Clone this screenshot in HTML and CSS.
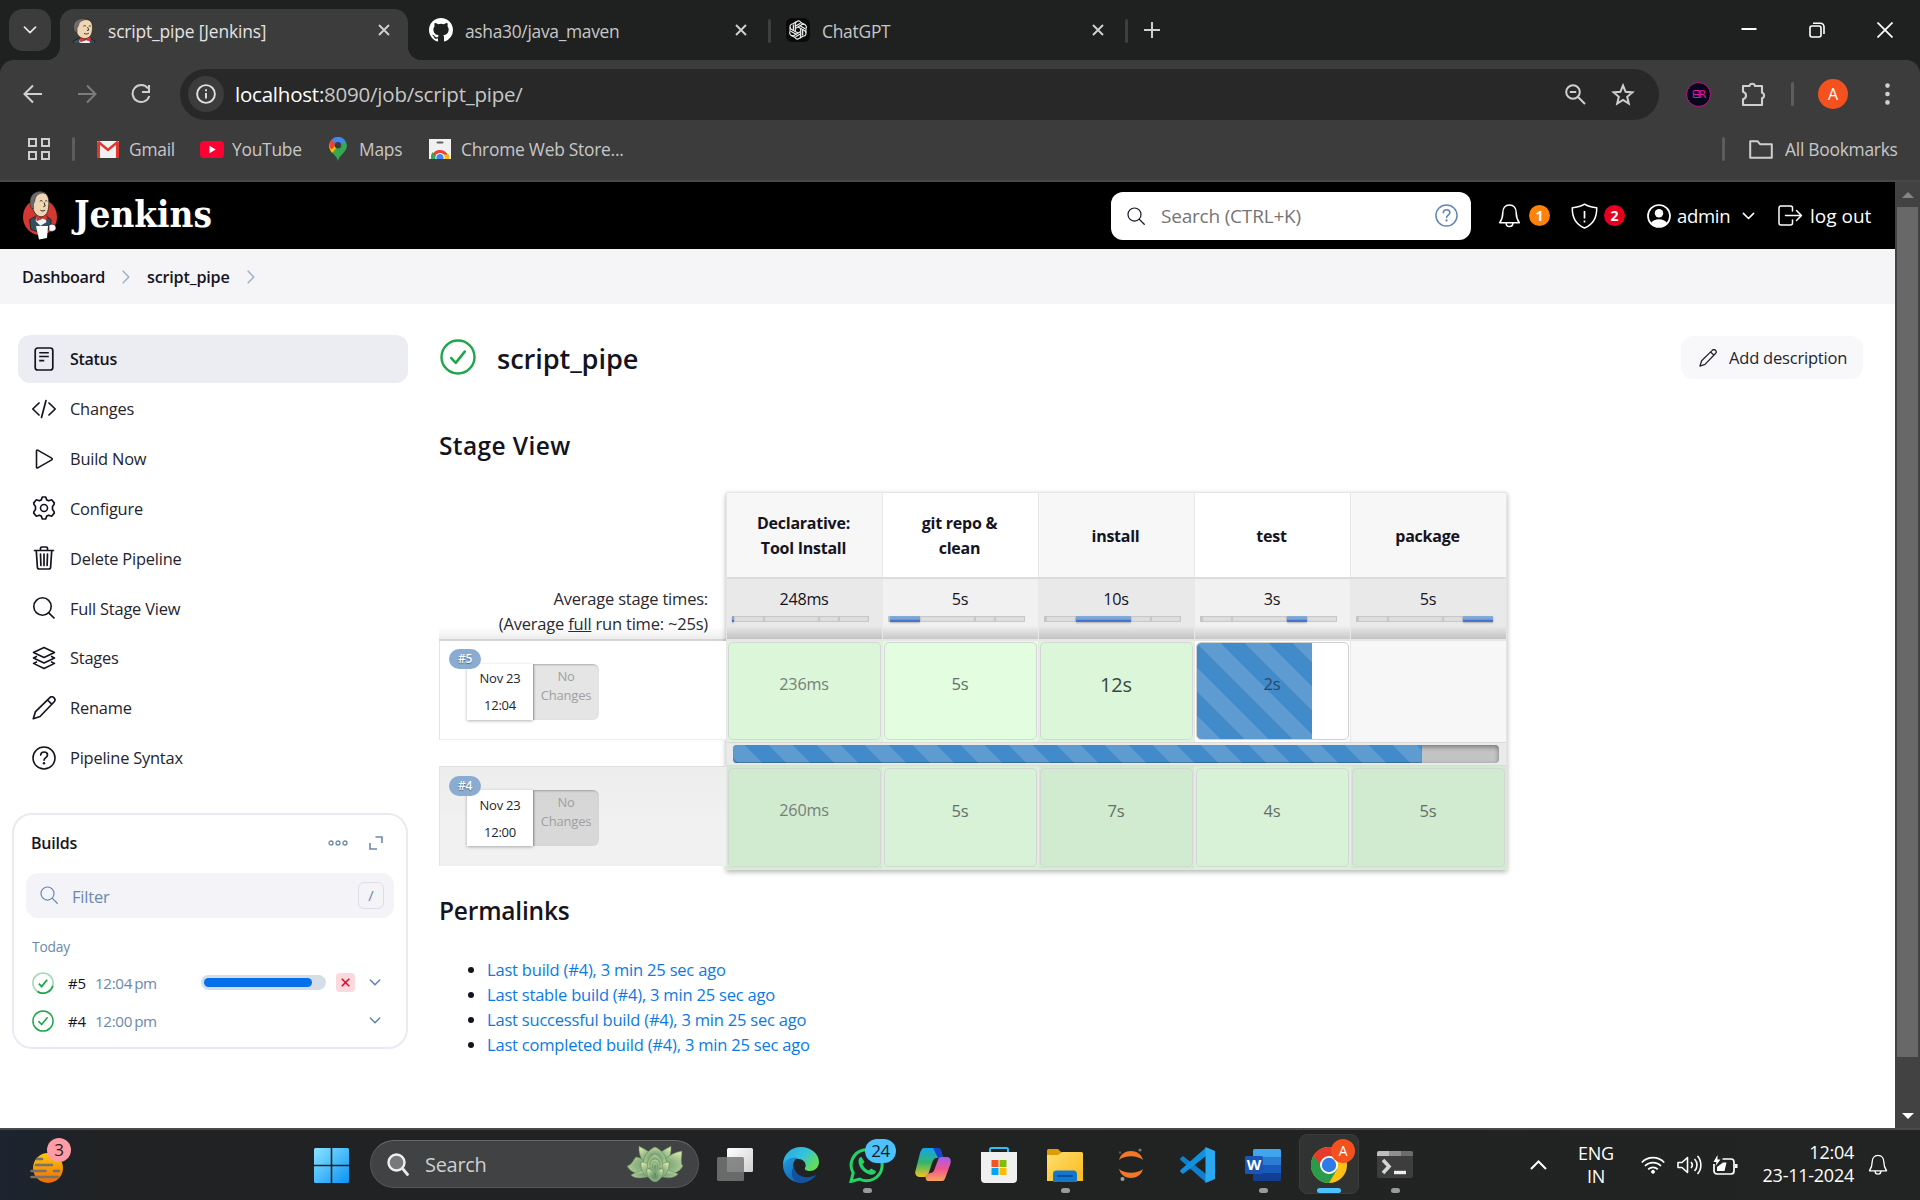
FILE: index.html
```html
<!DOCTYPE html>
<html lang="en">
<head>
<meta charset="utf-8">
<title>script_pipe [Jenkins]</title>
<link rel="stylesheet" href="styles.css">
</head>
<body>
<svg class="defs" aria-hidden="true">
  <defs>
    <linearGradient id="edgeA" x1="0" y1="0" x2="1" y2=".6"><stop offset="0" stop-color="#2aa7dc"/><stop offset=".55" stop-color="#35c1e0"/><stop offset="1" stop-color="#64de54"/></linearGradient>
    <linearGradient id="edgeB" x1="0" y1="0" x2="1" y2="1"><stop offset="0" stop-color="#1f9be0"/><stop offset="1" stop-color="#0f4f9c"/></linearGradient>
    <linearGradient id="win" x1="0" y1="0" x2="1" y2="1"><stop offset="0" stop-color="#8be4ff"/><stop offset="1" stop-color="#0a93f5"/></linearGradient>
    <linearGradient id="sun" x1="0" y1="0" x2="0" y2="1"><stop offset="0" stop-color="#fdc80c"/><stop offset="1" stop-color="#ee6a05"/></linearGradient>
    <linearGradient id="copA" x1="0" y1="0" x2="0" y2="1"><stop offset="0" stop-color="#14a4ee"/><stop offset=".5" stop-color="#35b56c"/><stop offset="1" stop-color="#f4c31f"/></linearGradient>
    <linearGradient id="copB" x1="0" y1="0" x2="0" y2="1"><stop offset="0" stop-color="#a35cf2"/><stop offset=".5" stop-color="#f0568d"/><stop offset="1" stop-color="#f8a35a"/></linearGradient>
    <linearGradient id="fold" x1="0" y1="0" x2="1" y2="1"><stop offset="0" stop-color="#ffdf72"/><stop offset="1" stop-color="#fbb918"/></linearGradient>
    <linearGradient id="tv" x1="0" y1="0" x2="1" y2="1"><stop offset="0" stop-color="#fff"/><stop offset="1" stop-color="#cfcfcf"/></linearGradient>
    <radialGradient id="leaf" cx=".5" cy=".6" r=".65"><stop offset="0" stop-color="#5d8c62"/><stop offset=".55" stop-color="#8fb685"/><stop offset="1" stop-color="#d2e0a4"/></radialGradient>
    <symbol id="x" viewBox="0 0 12 12"><path d="M1 1l10 10M11 1L1 11" fill="none" stroke="currentColor" stroke-width="1.9"/></symbol>
    <symbol id="chev" viewBox="0 0 14 8"><path d="M1.500 1.200L7 6.700l5.500-5.500" fill="none" stroke="currentColor" stroke-width="1.700" stroke-linecap="round" stroke-linejoin="round"/></symbol>
    <symbol id="crumb" viewBox="0 0 8 14"><path d="M1.200 1.200L6.800 7l-5.600 5.800" fill="none" stroke="currentColor" stroke-width="1.600" stroke-linecap="round" stroke-linejoin="round"/></symbol>
    <symbol id="mag" viewBox="0 0 24 24"><circle cx="10" cy="10" r="8.700" fill="none" stroke="currentColor" stroke-width="1.600"/><path d="M16.500 16.500L23 23" stroke="currentColor" stroke-width="1.700" stroke-linecap="round"/></symbol>
    <symbol id="help" viewBox="0 0 24 24"><circle cx="12" cy="12" r="11" fill="none" stroke="currentColor" stroke-width="1.600"/><path d="M8.700 9c.1-2 1.500-3 3.400-3s3.400 1.100 3.400 2.900c0 2.700-3.400 2.600-3.400 5.200" fill="none" stroke="currentColor" stroke-width="1.700" stroke-linecap="round"/><circle cx="12" cy="17.200" r="1.200" fill="currentColor"/></symbol>
    <symbol id="ok" viewBox="0 0 24 24"><circle cx="12" cy="12" r="11" fill="none" stroke="currentColor" stroke-width="1.600"/><path d="M7.500 12.700l3 3.200 6-7.500" fill="none" stroke="currentColor" stroke-width="1.700" stroke-linecap="round" stroke-linejoin="round"/></symbol>
    <symbol id="pencil" viewBox="0 0 24 24"><path d="M1.300 22.700l2.200-7.100L17.600 1.800a2.900 2.900 0 0 1 4.400 4.200L8 20.500zM15.500 4l4.500 4.300" fill="none" stroke="currentColor" stroke-width="1.700" stroke-linejoin="round"/></symbol>
    <symbol id="bell" viewBox="0 0 24 26"><path d="M12 1.500c-4.600 0-7 3.500-7 8 0 6-1.500 8-3.300 10.500h20.600C20.500 17.500 19 15.500 19 9.500c0-4.500-2.400-8-7-8zM8.500 20.500a3.500 3.500 0 0 0 7 0" fill="none" stroke="currentColor" stroke-width="1.600" stroke-linejoin="round"/></symbol>
    <g id="man">
      <path d="M8 21l-5 3 1 8 6 2h5l5-3 1-7-5-4z" fill="#335061" stroke="#111" stroke-width=".6"/>
      <path d="M9 20l3 4 4-4 1 6-5 3-4-4z" fill="#f4f4f4"/>
      <path d="M5 8c0-5 3.500-7.500 7-7.300C16.500 1 19 4 19 9c.2 6-1 12-6 12.500C8 22 4.500 15 5 8z" fill="#f0d6b7" stroke="#221" stroke-width=".6"/>
      <path d="M4 14C2.300 7 4 2.500 9 .8 12 0 15 .8 16 2c-3-.8-6 .2-7.500 2.500C7 7 8 8 6.500 10c-.6 1.500 0 3-.2 5z" fill="#6d6b6d" stroke="#221" stroke-width=".4"/>
      <path d="M11.500 8.500c.8-.6 1.600-.6 2.200 0M16 8.500c.6-.5 1.200-.5 1.700 0M15 9.500l1 3-1.500.6M12 16c1.500 1 3 .8 4-.2" fill="none" stroke="#221" stroke-width=".8"/>
      <path d="M8.500 20l4.500 2 4.300-2.500.7 4.700-4.600-1.400-4.300 2.200z" fill="#d33833" stroke="#711" stroke-width=".3"/>
    </g>
  </defs>
</svg>

<header class="browser">
  <div class="tabstrip">
    <button class="tab-search"><svg width="14" height="8"><use href="#chev"/></svg></button>
    <div class="tab active">
      <svg class="fav" width="24" height="25" viewBox="2 0 20 26" preserveAspectRatio="none"><use href="#man"/></svg>
      <span class="t1">script_pipe [Jenkins]</span>
      <svg width="12" height="12"><use href="#x"/></svg>
    </div>
    <div class="tab tab2">
      <svg class="fav" width="24" height="24" viewBox="0 0 16 16"><path fill="#fff" d="M8 0C3.580 0 0 3.580 0 8c0 3.540 2.290 6.530 5.470 7.590.4.070.55-.17.55-.38 0-.19-.01-.82-.01-1.490-2.010.37-2.530-.49-2.690-.94-.09-.23-.48-.94-.82-1.130-.28-.15-.68-.52-.01-.53.63-.01 1.080.58 1.230.82.720 1.210 1.870.87 2.330.66.070-.52.28-.87.51-1.070-1.780-.2-3.640-.89-3.640-3.950 0-.87.31-1.590.82-2.150-.08-.2-.36-1.020.08-2.120 0 0 .67-.21 2.200.82a7.600 7.600 0 0 1 4 0c1.530-1.040 2.200-.82 2.200-.82.44 1.100.16 1.920.08 2.120.51.560.82 1.270.82 2.150 0 3.070-1.870 3.750-3.650 3.950.29.250.54.730.54 1.480 0 1.070-.01 1.930-.01 2.200 0 .21.150.46.55.38A8 8 0 0 0 16 8c0-4.420-3.580-8-8-8z"/></svg>
      <span class="t2">asha30/java_maven</span>
      <svg width="12" height="12"><use href="#x"/></svg>
    </div>
    <i class="tsep"></i>
    <div class="tab tab3">
      <svg class="fav" width="24" height="24" viewBox="0 0 24 24"><rect width="24" height="24" rx="6" fill="#0a0a0a"/><g fill="none" stroke="#eee" stroke-width="1.200"><g id="petal"><path d="M9.300 8.300V5.800a3 3 0 0 1 5.600-1.300l3.300 2"/><path d="M9.300 13.500V8.200l5.200-3"/></g><use href="#petal" transform="rotate(60 12 12)"/><use href="#petal" transform="rotate(120 12 12)"/><use href="#petal" transform="rotate(180 12 12)"/><use href="#petal" transform="rotate(240 12 12)"/><use href="#petal" transform="rotate(300 12 12)"/></g></svg>
      <span class="t3">ChatGPT</span>
      <svg width="12" height="12"><use href="#x"/></svg>
    </div>
    <i class="tsep"></i>
    <svg class="newtab" width="16" height="16" viewBox="0 0 16 16"><path d="M8 0v16M0 8h16" stroke="#d0d0d0" stroke-width="2"/></svg>
    <div class="wincontrols">
      <svg width="16" height="16" viewBox="0 0 16 16"><path d="M.5 7h15" stroke="#fff" stroke-width="2"/></svg>
      <svg width="16" height="16" viewBox="0 0 16 16" fill="none" stroke="#fff" stroke-width="1.600"><rect x="1" y="4" width="11" height="11" rx="2"/><path d="M4 1.200h7.500a3.500 3.500 0 0 1 3.500 3.500V12"/></svg>
      <svg width="16" height="16" viewBox="0 0 16 16"><path d="M.5.500l15 15M15.500.500l-15 15" stroke="#fff" stroke-width="1.700"/></svg>
    </div>
  </div>

  <div class="toolbar">
    <svg class="nav" width="20" height="20" viewBox="0 0 20 20"><path d="M19 10H2M10 1.500L1.500 10l8.500 8.500" fill="none" stroke="#d0d0d0" stroke-width="2"/></svg>
    <svg class="nav" width="20" height="20" viewBox="0 0 20 20"><path d="M1 10h17M10 1.500l8.500 8.500-8.500 8.500" fill="none" stroke="#7c7c7c" stroke-width="2"/></svg>
    <svg class="nav" width="20" height="20" viewBox="0 0 20 20"><path d="M17 4.500A8.500 8.500 0 1 0 18.300 12" fill="none" stroke="#d0d0d0" stroke-width="2"/><path d="M18 1v7h-7" fill="none" stroke="#d0d0d0" stroke-width="2"/></svg>
    <div class="urlbar">
      <span class="siteinfo"><svg width="20" height="20" viewBox="0 0 20 20"><circle cx="10" cy="10" r="8.900" fill="none" stroke="#e0e0e0" stroke-width="1.900"/><path d="M10 9v5.500M10 5.300v2" stroke="#e0e0e0" stroke-width="1.900"/></svg></span>
      <span class="url"><b>localhost:</b>8090/job/script_pipe/</span>
      <svg class="zoomout" width="21" height="21" viewBox="0 0 21 21" fill="none" stroke="#cfcfcf" stroke-width="2"><circle cx="8" cy="8" r="6.800"/><path d="M4.800 8h6.400M13 13l7 7"/></svg>
      <svg class="star" width="24" height="23" viewBox="0 0 24 23"><path d="M12 2.500l2.600 6.300 6.800.6-5.200 4.400 1.600 6.700-5.800-3.600-5.800 3.600 1.600-6.700L2.600 9.400l6.800-.6z" fill="none" stroke="#cfcfcf" stroke-width="2"/></svg>
    </div>
    <span class="ext">ᗺR</span>
    <svg class="puzzle" width="25" height="25" viewBox="0 0 25 25"><path d="M2 4h6.500a2.800 2.800 0 0 1 5.500 0h7v6.800a2.800 2.800 0 0 1 0 5.400V23H2v-5.800c4-1.200 4-6.200 0-7.400z" fill="none" stroke="#cfcfcf" stroke-width="2.100" stroke-linejoin="round"/></svg>
    <i class="vsep"></i>
    <span class="avatar">A</span>
    <svg class="dots" width="5" height="22" viewBox="0 0 5 22" fill="#d0d0d0"><circle cx="2.500" cy="2.600" r="2.300"/><circle cx="2.500" cy="11" r="2.300"/><circle cx="2.500" cy="19.400" r="2.300"/></svg>
  </div>

  <div class="bookmarks">
    <svg class="apps" width="22" height="22" viewBox="0 0 22 22" fill="none" stroke="#cfcfcf" stroke-width="2"><path d="M1 1h7v7H1zM14 1h7v7h-7zM1 14h7v7H1zM14 14h7v7h-7z"/></svg>
    <i class="vsep s1"></i>
    <svg class="b-gmail" width="22" height="17" viewBox="0 0 22 17"><path d="M0 0h22v17H0z" fill="#f1f1f1"/><path d="M3 17V4l8 6.500L19 4v13h3V1.500A1.800 1.800 0 0 0 19.500.3L11 7.200 2.500.3A1.800 1.800 0 0 0 0 1.500V17z" fill="#e0382c"/></svg>
    <span class="w-gmail">Gmail</span>
    <svg width="24" height="17" viewBox="0 0 24 17"><rect width="24" height="17" rx="4" fill="#f03"/><path d="M9.500 4.800v7.400l6.200-3.700z" fill="#fff"/></svg>
    <span class="w-yt">YouTube</span>
    <svg class="b-map" width="18" height="24" viewBox="0 0 18 24"><path d="M9 24C8 18 0 15 0 8.500A9 9 0 0 1 9 0a9 9 0 0 1 9 8.500C18 15 10 18 9 24z" fill="#34a853"/><path d="M1 12.500C0 10 0 7 1.800 4.200L9 9l-5.800 7C2.300 15 1.500 14 1 12.500z" fill="#fbbc04"/><path d="M1.800 4.200L3 2.500 8 7 2.500 12.500C0 10 0 7 1.800 4.200z" fill="#ea4335"/><path d="M3 2.700C6-1 13-1 16.200 4L9 10z" fill="#4285f4"/><circle cx="9" cy="8.200" r="3.200" fill="#3b3b3b"/></svg>
    <span class="w-maps">Maps</span>
    <svg width="22" height="20" viewBox="0 0 22 20"><path d="M0 0h22v20H0z" fill="#f1f1f1"/><rect x="7.500" y="2.500" width="7" height="2" rx="1" fill="#5f6368"/><path d="M2 20a9 9 0 0 1 17.500-3H11z" fill="#ea4335"/><path d="M2 20a9 9 0 0 1 1.500-7l5 7z" fill="#34a853"/><path d="M14 20l-1-4.500h7c.5 1.500.5 3 .3 4.500z" fill="#fbbc04"/><circle cx="11" cy="18.500" r="4.600" fill="#fff"/><circle cx="11" cy="18.500" r="3.600" fill="#4285f4"/></svg>
    <span class="w-cws">Chrome Web Store...</span>
    <i class="vsep s2"></i>
    <svg class="b-folder" width="24" height="19" viewBox="0 0 24 19"><path d="M1.200 1.200h7.300l2.500 3h11.800v13.600H1.200z" fill="none" stroke="#cfcfcf" stroke-width="2" stroke-linejoin="round"/></svg>
    <span class="w-all">All Bookmarks</span>
  </div>
</header>

<div class="viewport">
  <div class="page">
    <header class="jheader">
      <svg class="jlogo" width="36" height="49" viewBox="0 0 36 49"><ellipse cx="18" cy="26" rx="17" ry="18" fill="#d33833"/><g transform="translate(4 0) scale(1.200)"><use href="#man"/></g><path d="M14 35h12l-1 12-8 1.500z" fill="#fff"/><path d="M27 34c4-2 7 0 7 3s-4 4-7 3z" fill="#f5f5f5" stroke="#111" stroke-width=".6"/></svg>
      <span class="jname">Jenkins</span>
      <div class="jsearch">
        <svg class="q" width="18" height="18"><use href="#mag"/></svg>
        <span>Search (CTRL+K)</span>
        <svg class="h" width="23" height="23"><use href="#help"/></svg>
      </div>
      <svg class="jbell" width="23" height="26"><use href="#bell"/></svg>
      <span class="count orange">1</span>
      <svg class="jshield" width="27" height="26" viewBox="0 0 27 26"><path d="M13.500 1.200C10 3.500 5.500 4.500 1.300 4.700 1 14 4 21 13.500 25 23 21 26 14 25.700 4.700 21.500 4.500 17 3.500 13.500 1.200z" fill="none" stroke="#fff" stroke-width="1.500" stroke-linejoin="round"/><path d="M13.500 8v7.500M13.500 17.500v2" stroke="#fff" stroke-width="1.700"/></svg>
      <span class="count red">2</span>
      <svg class="juser" width="24" height="24" viewBox="0 0 24 24"><circle cx="12" cy="12" r="11" fill="none" stroke="#fff" stroke-width="1.700"/><circle cx="12" cy="9.300" r="4.200" fill="#fff"/><path d="M3.800 19.200c3-5.400 13.400-5.400 16.400 0C16 24 8 24 3.800 19.200z" fill="#fff"/></svg>
      <span class="jadmin">admin</span>
      <svg class="jchev" width="13" height="8"><use href="#chev"/></svg>
      <svg class="jout" width="25" height="21" viewBox="0 0 25 21"><path d="M14.500 6V3a2 2 0 0 0-2-2H3a2 2 0 0 0-2 2v15a2 2 0 0 0 2 2h9.500a2 2 0 0 0 2-2v-3M7.500 10.500H23M18.500 5.500l5 5-5 5" fill="none" stroke="#fff" stroke-width="1.500" stroke-linecap="round" stroke-linejoin="round"/></svg>
      <span class="jlogout">log out</span>
    </header>

    <nav class="crumbs">
      <span class="c1">Dashboard</span><svg width="8" height="14"><use href="#crumb"/></svg>
      <span class="c2">script_pipe</span><svg width="8" height="14"><use href="#crumb"/></svg>
    </nav>

    <div class="columns">
      <aside class="side">
        <ul class="tasks">
          <li class="on"><svg viewBox="0 0 24 24"><rect x="3.200" y="1" width="17.600" height="22" rx="2.500" fill="none" stroke="currentColor" stroke-width="1.700"/><path d="M7.200 5.700h9.600M7.200 9.500h9.600M7.200 13.600h5" stroke="currentColor" stroke-width="1.600"/></svg>Status</li>
          <li><svg viewBox="0 0 24 24"><path d="M7 6L.8 12 7 18M17 6l6.200 6L17 18M14 3.500L9.500 20.500" fill="none" stroke="currentColor" stroke-width="1.700" stroke-linecap="round" stroke-linejoin="round"/></svg>Changes</li>
          <li><svg viewBox="0 0 24 24"><path d="M4.500 3.800v16.400a.8.800 0 0 0 1.200.7l14-8a1 1 0 0 0 0-1.800l-14-8a.8.800 0 0 0-1.200.7z" fill="none" stroke="currentColor" stroke-width="1.600"/></svg>Build Now</li>
          <li><svg viewBox="0 0 24 24"><circle cx="12" cy="12" r="3.500" fill="none" stroke="currentColor" stroke-width="1.600"/><path d="M10.300 1h3.400l1 2.900 2 .9 2.900-1 2.700 3.100-.3 1.500-1.500 2v3.200l1.500 2 .3 1.500-2.700 3.100-2.900-1-2 .9-1 2.900h-3.400l-1-2.900-2-.9-2.900 1-2.700-3.100.3-1.500 1.500-2v-3.200L2 8.400l-.3-1.500 2.700-3.100 2.900 1 2-.9z" fill="none" stroke="currentColor" stroke-width="1.700" stroke-linejoin="round"/></svg>Configure</li>
          <li><svg viewBox="0 0 24 24"><path d="M2.500 4.500h19M8.500 4V2.300A1.300 1.300 0 0 1 9.800 1h4.400a1.300 1.300 0 0 1 1.300 1.300V4M4.300 5l1.100 16.200a1.900 1.900 0 0 0 1.900 1.800h9.400a1.900 1.900 0 0 0 1.900-1.800L19.700 5M12 8v11.500M8.500 8l.4 11.500M15.500 8l-.4 11.500" fill="none" stroke="currentColor" stroke-width="1.700" stroke-linecap="round"/></svg>Delete Pipeline</li>
          <li><svg viewBox="0 0 24 24"><circle cx="10.500" cy="10.500" r="8.700" fill="none" stroke="currentColor" stroke-width="1.600"/><path d="M16.800 16.800L22.500 22.500" stroke="currentColor" stroke-width="1.700"/></svg>Full Stage View</li>
          <li><svg viewBox="0 0 24 24" fill="none" stroke="currentColor" stroke-width="1.600" stroke-linejoin="round"><path d="M12 1.500L22.500 6.500 12 11.500 1.500 6.500zM5 10.300l-3.500 1.700L12 17l10.500-5-3.500-1.700M5 15.700l-3.500 1.700L12 22.500l10.500-5.100-3.500-1.700"/></svg>Stages</li>
          <li><svg viewBox="0 0 24 24"><use href="#pencil"/></svg>Rename</li>
          <li><svg viewBox="0 0 24 24"><use href="#help"/></svg>Pipeline Syntax</li>
        </ul>
        <section class="builds">
          <div class="bhead"><b>Builds</b>
            <svg class="bd" width="20" height="6" viewBox="0 0 20 6" fill="none" stroke="#6b89ad" stroke-width="1.300"><circle cx="3" cy="3" r="2"/><circle cx="10" cy="3" r="2"/><circle cx="17" cy="3" r="2"/></svg>
            <svg width="14" height="14" viewBox="0 0 14 14" fill="none" stroke="#6b89ad" stroke-width="1.600"><path d="M6.500 1H13v6M1 7v6h7"/></svg>
          </div>
          <div class="filter"><svg width="18" height="18"><use href="#mag"/></svg><span>Filter</span><kbd>/</kbd></div>
          <div class="today">Today</div>
          <div class="build">
            <svg class="spin" width="22" height="22" viewBox="0 0 24 24"><circle cx="12" cy="12" r="11" fill="none" stroke="#a5d9b4" stroke-width="1.700"/><path d="M22.700 15A11 11 0 0 1 6 21.300" fill="none" stroke="#1ea64b" stroke-width="1.800"/><path d="M7.500 12.700l3 3.200 6-7.500" fill="none" stroke="#1ea64b" stroke-width="2"/></svg>
            <span class="num">#5</span><span class="time">12:04&#8201;pm</span>
            <span class="prog"><i></i></span>
            <span class="stop"><svg width="9" height="9"><use href="#x"/></svg></span>
            <svg class="bch" width="12" height="7"><use href="#chev"/></svg>
          </div>
          <div class="build">
            <svg width="22" height="22"><use href="#ok"/></svg>
            <span class="num">#4</span><span class="time">12:00&#8201;pm</span>
            <svg class="bch end" width="12" height="7"><use href="#chev"/></svg>
          </div>
        </section>
      </aside>

      <main class="main">
        <div class="titlebar">
          <svg width="36" height="36" viewBox="0 0 24 24"><use href="#ok"/></svg>
          <h1>script_pipe</h1>
          <button class="adddesc"><svg width="18" height="18"><use href="#pencil"/></svg>Add description</button>
        </div>
        <h2>Stage View</h2>
        <div class="stage">
          <div class="runs">
            <div class="avg">Average stage times:<br>(Average <u>full</u> run time: ~25s)</div>
            <div class="run">
              <span class="badge">#5</span>
              <div class="start">Nov 23<br>12:04</div><div class="changes">No<br>Changes</div>
            </div>
            <div class="run odd">
              <span class="badge">#4</span>
              <div class="start">Nov 23<br>12:00</div><div class="changes">No<br>Changes</div>
            </div>
          </div>
          <div class="table">
            <div class="row head"><div>Declarative:<br>Tool Install</div><div>git repo &amp;<br>clean</div><div>install</div><div>test</div><div>package</div></div>
            <div class="row totals">
              <div>248ms<span class="mini"><i></i><i></i><i></i><i></i><i></i></span></div>
              <div>5s<span class="mini"><i></i><i></i><i></i><i></i><i></i></span></div>
              <div>10s<span class="mini"><i></i><i></i><i></i><i></i><i></i></span></div>
              <div>3s<span class="mini"><i></i><i></i><i></i><i></i><i></i></span></div>
              <div>5s<span class="mini"><i></i><i></i><i></i><i></i><i></i></span></div>
            </div>
            <div class="row cells r5">
              <div class="g"><span>236ms</span></div><div class="g"><span class="m">5s</span></div><div class="g"><span class="l">12s</span></div>
              <div class="running"><span class="m">2s</span></div><div></div>
            </div>
            <div class="total"><div class="track"><i></i></div></div>
            <div class="row cells r4">
              <div class="g"><span>260ms</span></div><div class="g"><span class="m">5s</span></div><div class="g"><span class="m">7s</span></div>
              <div class="g"><span class="m">4s</span></div><div class="g"><span class="m">5s</span></div>
            </div>
          </div>
        </div>
        <h2 class="perma">Permalinks</h2>
        <ul class="links">
          <li><a>Last build (#4), 3 min 25 sec ago</a></li>
          <li><a>Last stable build (#4), 3 min 25 sec ago</a></li>
          <li><a>Last successful build (#4), 3 min 25 sec ago</a></li>
          <li><a>Last completed build (#4), 3 min 25 sec ago</a></li>
        </ul>
      </main>
    </div>
  </div>
  <div class="scroll"><i class="up"></i><i class="thumb"></i><i class="down"></i></div>
</div>

<footer class="taskbar">
  <div class="weather"><svg width="34" height="32" viewBox="0 0 34 32"><circle cx="18" cy="16" r="15" fill="url(#sun)"/><g stroke="#77716c" stroke-width="2.600" stroke-linecap="round"><path d="M7 7h5M6 13h16M1.500 19h14M24 19h5M1.500 25h26"/></g></svg><span>3</span></div>
  <svg class="start-btn" width="35" height="35" viewBox="0 0 35 35"><path d="M0 1.500A1.500 1.500 0 0 1 1.500 0H16.700V16.700H0zM18.300 0h15.200A1.500 1.500 0 0 1 35 1.500V16.700H18.300zM0 18.300H16.700V35H1.500A1.500 1.500 0 0 1 0 33.500zM18.300 18.300H35V33.500A1.500 1.500 0 0 1 33.500 35H18.300z" fill="url(#win)"/></svg>
  <div class="tsearch">
    <svg width="22" height="23" viewBox="0 0 22 23"><circle cx="9.500" cy="9.500" r="8" fill="#77797a" stroke="#f0f0f0" stroke-width="2.400"/><path d="M15.500 15.500l5 6" stroke="#e8e8e8" stroke-width="2.800" stroke-linecap="round"/></svg>
    <span>Search</span>
    <svg class="plant" width="56" height="36" viewBox="0 0 56 36"><g fill="url(#leaf)" stroke="#5f885b" stroke-width=".6">
      <path d="M28 24C18 20 11 12 12 0 18 4 24 5 28 14zM28 24C38 20 45 12 44 0 38 4 32 5 28 14z"/>
      <path d="M28 27C17 30 5 29 0 20c5-1 6-6 9-9 7 1 14 6 19 16zM28 27c11 3 23 2 28-7-3-3-1-10-1-15-12 2-22 10-27 22z"/>
      <path d="M28 28C18 33 7 33 4 29c8-5 16-6 24-1zM28 28c10 5 19 5 23 0-8-4-15-5-23 0z"/>
      <path d="M17 20C15 11 21 4 28 1c7 3 13 10 11 19z"/>
      <path d="M28 33c-9 0-15-8-14-17 7 0 13 5 14 17zM28 33c9 0 15-8 14-17-7 0-13 5-14 17z"/>
      <path d="M21 22c-2-7 2-12 7-14 5 2 9 7 7 14z"/>
      <path d="M28 36c-5-1-9-7-8-13 4-1 8 3 8 7 0-4 4-8 8-7 1 6-3 12-8 13z"/>
      <ellipse cx="28" cy="20" rx="5" ry="7"/><ellipse cx="28" cy="20.500" rx="2.500" ry="4.500"/></g></svg>
  </div>
  <div class="apps-row">
    <div class="app"><svg viewBox="0 0 36 36"><rect x="10" y="1" width="26" height="24" rx="1.500" fill="url(#tv)"/><rect y="10" width="27" height="24" rx="1.500" fill="#777" opacity=".85"/></svg></div>
    <div class="app"><svg viewBox="0 0 36 36"><path d="M0 18C0 7 8 0 18 0s18 7 18 15c0 6-5 9-9 9-3 0-6-1-5-3 1.500-2 1-8-6-9C9 11 2 15 0 18z" fill="url(#edgeA)"/><path d="M0 18C2 12 9 9 15 11c-5 2-6 8-4 13 3 6 12 9 22 4-5 7-15 10-23 6C4 31 0 25 0 18z" fill="url(#edgeB)"/><path d="M11 19c0 9 12 15 22 9-5 7-15 10-21 6-4-4-4-11-1-15z" fill="#12529f"/></svg></div>
    <div class="app run-on"><svg viewBox="0 0 36 36"><path d="M2 34.500l2.200-8.500A15.500 15.500 0 1 1 10.500 32z" fill="none" stroke="#22d366" stroke-width="3"/><path d="M12.500 10l3 5-2 2.500c1.500 3 3.500 5 6.500 6l2-2 5 2.800c-1 3.500-4 4-6.500 3.200C14.500 25.500 9.500 20.500 9.500 14c0-2 1-4 3-4z" fill="#22d366"/></svg><span class="bubble">24</span></div>
    <div class="app"><svg viewBox="0 0 36 36"><path d="M9 1h13c3 0 4 2 5 6l1 4h-6c-3 0-4 2-5 5l-3 9c-1 3-2 5-5 5H5c-4 0-6-3-4-8L5 6c1-3 2-5 4-5z" fill="url(#copA)"/><path d="M18 1h4c3 0 4 2 5 6l1 4h-5z" fill="#1541cc"/><path d="M27 34H14c-3 0-4-2-3-6l4-2c3 0 4-2 5-5l3-8c1-3 2-3 5-3h4c3 0 5 3 3 8l-4 11c-1 3-2 5-4 5z" fill="url(#copB)"/></svg></div>
    <div class="app"><svg viewBox="0 0 36 36"><path d="M9 6V2.500A1.500 1.500 0 0 1 10.500 1h15A1.500 1.500 0 0 1 27 2.500V6" fill="none" stroke="#35bdf2" stroke-width="2"/><path d="M0 5h36v27a4 4 0 0 1-4 4H4a4 4 0 0 1-4-4z" fill="#f0f0f0"/><path d="M10.500 13h7v7h-7z" fill="#f35325"/><path d="M18.500 13h7v7h-7z" fill="#81bc06"/><path d="M10.500 21h7v7h-7z" fill="#05a6f0"/><path d="M18.500 21h7v7h-7z" fill="#ffba08"/></svg></div>
    <div class="app run-on"><svg viewBox="0 0 36 36"><path d="M0 8V3.500A1.500 1.500 0 0 1 1.500 2H11l4 4v4z" fill="#dd9c06"/><path d="M0 8h11l4-3h19.500A1.500 1.500 0 0 1 36 6.500V34H0z" fill="url(#fold)"/><path d="M6 35V27a3.500 3.500 0 0 1 3.500-3.500h17A3.500 3.500 0 0 1 30 27v8z" fill="#1477cf"/><path d="M11 29h14" stroke="#0c4f96" stroke-width="2" stroke-linecap="round"/></svg></div>
    <div class="app"><svg viewBox="0 0 36 36"><path d="M6 13C9 1 27 1 30 13 24 8 12 8 6 13z" fill="#f37726"/><path d="M6 22c3 12 21 12 24 0-6 5-18 5-24 0z" fill="#f37726"/><circle cx="27" cy="3" r="1.600" fill="#767677"/><circle cx="7" cy="5.500" r="1.200" fill="#555"/><circle cx="9.500" cy="32" r="2" fill="#9e9e9e"/></svg></div>
    <div class="app"><svg viewBox="0 0 36 36"><path d="M1 11.500l3-2.500L27 27v8.500L1.500 13z" fill="#0f7fcf"/><path d="M1 24.500L4 27 27 9V.500L1.500 23z" fill="#0f91df"/><path d="M26.500 0L36 4v28l-9.500 4z" fill="#2aa9f2"/></svg></div>
    <div class="app run-on"><svg viewBox="0 0 36 36"><path d="M8 3.500A1.500 1.500 0 0 1 9.500 2h25A1.500 1.500 0 0 1 36 3.500V10H8z" fill="#41a5ee"/><path d="M8 10h28v8H8z" fill="#2b7cd3"/><path d="M8 18h28v8H8z" fill="#185abd"/><path d="M8 26h28v6.500a1.500 1.500 0 0 1-1.500 1.500h-25A1.500 1.500 0 0 1 8 32.500z" fill="#123f91"/><rect y="9" width="18" height="18" rx="1.500" fill="#1a54b4"/><text x="9" y="23" text-anchor="middle" class="wd">W</text></svg></div>
    <div class="app current"><svg viewBox="0 0 36 36"><circle cx="18" cy="18" r="18" fill="#fbc116"/><path d="M2.400 9A18 18 0 0 1 33.600 9H18l-8 13z" fill="#e33b2e"/><path d="M2.400 9A18 18 0 0 0 18 36l8-13.500-13 0z" fill="#2a9c49"/><circle cx="18" cy="18" r="9" fill="#fff"/><circle cx="18" cy="18" r="7.200" fill="#3178e8"/></svg><span class="bubble a">A</span></div>
    <div class="app run-on"><svg viewBox="0 0 36 36"><rect y="4" width="36" height="27" rx="2" fill="#3d3d3d"/><path d="M0 6a2 2 0 0 1 2-2h10v5H0z" fill="#bdbdbd"/><path d="M12 4h12v5H12z" fill="#8f8f8f"/><path d="M24 4h10a2 2 0 0 1 2 2v3H24z" fill="#6c6c6c"/><path d="M6 13l6 6.500L6 26" fill="none" stroke="#d5d5d5" stroke-width="3.600"/><path d="M17 25.500h12" stroke="#eee" stroke-width="3.400"/></svg></div>
  </div>
  <div class="tray">
    <svg class="tr-up" width="17" height="10" viewBox="0 0 17 10"><path d="M1 9l7.500-7.500L16 9" fill="none" stroke="#fff" stroke-width="2"/></svg>
    <div class="lang">ENG<br>IN</div>
    <svg class="wifi" width="24" height="18" viewBox="0 0 24 18" fill="none" stroke="#fff" stroke-width="1.700"><path d="M.8 6.500a15.500 15.500 0 0 1 22.400 0M4 10a11.200 11.200 0 0 1 16 0M7.200 13.300a6.800 6.800 0 0 1 9.600 0"/><circle cx="12" cy="15.800" r="1.500" fill="#fff" stroke-width="1"/></svg>
    <svg class="vol" width="25" height="20" viewBox="0 0 25 20" fill="none" stroke="#fff" stroke-width="1.600" stroke-linejoin="round"><path d="M1 7.500h4l5.500-5v15l-5.500-5H1zM14 7a4.500 4.500 0 0 1 0 6M17.500 4a8.500 8.500 0 0 1 0 12M20.500 1c4.500 5 4.500 13 0 18"/></svg>
    <svg class="bat" width="25" height="20" viewBox="0 0 25 20"><path d="M9.500 4H18a3 3 0 0 1 3 3v9a3 3 0 0 1-3 3H4a3 3 0 0 1-3-3V9" fill="none" stroke="#fff" stroke-width="1.700"/><path d="M4 16V12l6-4.500h3.500L11.500 16zM22 9h2.500v4H22zM4.500 0L.5 7h3l-1 4 5-6.500H4.500z" fill="#fff"/></svg>
    <div class="clock">12:04<br>23-11-2024</div>
    <svg class="tbell" width="20" height="22" viewBox="0 0 24 26"><use href="#bell"/></svg>
  </div>
</footer>
</body>
</html>
```
FILE: styles.css
```css
* { box-sizing: border-box; }
body {
  margin: 0; width: 1920px; height: 1200px; overflow: hidden;
  display: flex; flex-direction: column;
  font: 16.5px/25px "Open Sans", "Noto Sans", sans-serif; letter-spacing: -.2px; color: #14141f;
  white-space: nowrap;
}
svg { display: block; flex: none; }
ul { list-style: none; margin: 0; padding: 0; }
button { font: inherit; letter-spacing: inherit; color: inherit; border: 0; padding: 0; }
.defs { width: 0; height: 0; position: absolute; }

/* Browser window */
.browser { background: #1f2120; height: 182px; flex: none; font-size: 17.4px; letter-spacing: -.25px; color: #c7c7c7; }
.tabstrip { height: 60px; display: flex; align-items: center; padding-left: 9px; }
.tab-search { width: 42px; height: 42px; border-radius: 14px; background: #3c3c3c; color: #e3e3e3; display: grid; place-items: center; margin-right: 9px; }
.tab { height: 60px; display: flex; align-items: center; }
.tab svg { color: #d0d0d0; }
.tab span { padding-top: 3px; }
.tab .fav { margin-right: 12px; }
.tab.active { width: 348px; height: 51px; margin-top: 9px; background: #3c3c3c; color: #e3e3e3; border-radius: 14px 14px 0 0; padding: 0 18px 9px 12px; position: relative; }
.tab.active::before, .tab.active::after { content: ""; position: absolute; bottom: 0; width: 14px; height: 14px; }
.tab.active::before { left: -14px; background: radial-gradient(circle at 0 0, transparent 14px, #3c3c3c 14.5px); }
.tab.active::after { right: -14px; background: radial-gradient(circle at 100% 0, transparent 14px, #3c3c3c 14.5px); }
.t1 { width: 270px; letter-spacing: -.15px; }
.tab2 { width: 360px; padding-left: 21px; }
.t2 { width: 270px; letter-spacing: -.3px; }
.tab3 { width: 354px; padding-left: 15px; }
.t3 { width: 270px; }
.tsep { width: 3px; height: 24px; background: #3e3e3e; border-radius: 2px; margin-top: 2px; }
.newtab { margin-left: 16px; }
.wincontrols { display: flex; gap: 52px; margin-left: auto; padding-right: 27px; }
.toolbar { height: 68px; background: #3c3c3c; border-radius: 14px 14px 0 0; display: flex; align-items: center; padding: 0 30px 0 23px; }
.nav { margin-right: 34px; }
.nav + .nav + .nav { margin-right: 29px; }
.urlbar { width: 1479px; height: 51px; border-radius: 26px; background: #282828; display: flex; align-items: center; padding: 0 24px 0 8px; }
.siteinfo { width: 36px; height: 36px; border-radius: 50%; background: #3c3c3c; display: grid; place-items: center; }
.url { font-size: 20.5px; letter-spacing: -.22px; margin-left: 11px; }
.url b { font-weight: 400; color: #fff; }
.zoomout { margin-left: auto; }
.star { margin-left: 25px; }
.ext { width: 25px; height: 25px; border-radius: 50%; margin-left: 27px; background: #06081a; border: 1px solid #c0138d; color: #e0169f; font: 11px/23px "DejaVu Sans", sans-serif; text-align: center; letter-spacing: -1px; }
.puzzle { margin-left: 30px; }
.vsep { width: 3px; height: 24px; background: #5d5d5d; border-radius: 2px; }
.toolbar .vsep { margin-left: 25px; }
.avatar { width: 30px; height: 30px; border-radius: 50%; background: #f4511e; color: #fff; font-size: 16px; line-height: 30px; text-align: center; margin-left: 24px; }
.dots { margin-left: auto; }
.bookmarks { height: 54px; background: #3c3c3c; border-bottom: 2px solid #484848; display: flex; align-items: center; padding: 0 0 10px 28px; }
.bookmarks span { padding-top: 1px; }
.s1 { margin: 0 22px 0 22px; }
.w-gmail { width: 71px; margin-left: 10px; }
.w-yt { width: 97px; margin-left: 8px; }
.w-maps { width: 70px; margin-left: 12px; }
.w-cws { margin-left: 10px; width: 170px; }
.s2 { margin-left: auto; }
.b-folder { margin-left: 24px; }
.w-all { margin: 0 21px 0 12px; width: 114px; }

/* Page */
.viewport { height: 948px; flex: none; display: flex; border-bottom: 2px solid #4a4a4a; }
.page { width: 1895px; background: #fff; display: flex; flex-direction: column; }
.scroll { width: 25px; background: #424242; display: flex; flex-direction: column; align-items: center; padding: 10px 0 9px; }
.up { border: 6px solid transparent; border-top: 0; border-bottom: 6px solid #858585; }
.thumb { width: 21px; height: 850px; background: #686868; margin-top: 9px; }
.down { border: 6px solid transparent; border-bottom: 0; border-top: 6px solid #fff; margin-top: auto; }
.jheader { height: 67px; background: #000; color: #fff; display: flex; align-items: center; padding-left: 22px; font-size: 18.5px; letter-spacing: -.3px; }
.jname { font: 700 36.5px/48px "DejaVu Serif", serif; font-stretch: condensed; letter-spacing: 0; margin: -2px 0 0 16px; width: 160px; }
.jsearch { margin-left: 877px; width: 360px; height: 48px; border-radius: 12px; background: #fff; color: #757575; display: flex; align-items: center; padding: 0 13px 0 16px; font-size: 19px; letter-spacing: -.2px; }
.jsearch span { padding-top: 1px; }
.jsearch .q { color: #14141f; margin-right: 16px; }
.jsearch .h { color: #6587b5; margin-left: auto; }
.jbell { margin-left: 27px; }
.count { width: 21px; height: 21px; border-radius: 50%; font: 700 14px/21px "Open Sans", sans-serif; text-align: center; letter-spacing: 0; }
.orange { background: #ff820a; margin-left: 8px; }
.red { background: #e6001f; margin-left: 6px; }
.jshield { margin-left: 21px; }
.juser { margin-left: 22px; }
.jadmin { width: 54px; margin-left: 6px; }
.jchev { margin-left: 11px; }
.jout { margin-left: 23px; }
.jlogout { margin-left: 7px; font-size: 19px; letter-spacing: 0; padding-top: 1px; }
.crumbs { height: 55px; background: #f5f5f8; display: flex; align-items: center; padding-left: 22px; font-weight: 600; font-size: 16.2px; letter-spacing: -.3px; }
.crumbs span { padding-top: 1px; }
.crumbs svg { color: #9fb3cc; }
.c1 { width: 100px; }
.c2 { width: 100px; margin-left: 17px; letter-spacing: -.2px; }
.columns { flex: 1; display: flex; }
.side { width: 408px; padding: 31px 0 0 13px; }
.tasks { margin-left: 5px; display: flex; flex-direction: column; gap: 2px; }
.tasks li { height: 47.85px; display: flex; align-items: center; padding-left: 14px; border-radius: 12px; color: #24242f; font-size: 16.4px; }
.tasks svg { width: 24px; height: 24px; margin-right: 14px; color: #14141f; }
.tasks .on { background: #ecedf3; color: #14141f; font-weight: 600; font-size: 16px; letter-spacing: -.3px; padding-top: 1px; }
.builds { margin-top: 31px; margin-left: -1px; width: 396px; height: 236px; border: 2px solid #eaeaf2; border-radius: 20px; padding: 0 12px 0 12px; }
.bhead { height: 56px; display: flex; align-items: center; padding: 1px 11px 0 5px; }
.bhead b { font-weight: 600; font-size: 16px; margin-right: auto; }
.bd { margin-right: 21px; }
.filter { height: 45px; margin-top: 2px; border-radius: 12px; background: #f3f3f8; color: #6b89ad; display: flex; align-items: center; padding: 0 10px 0 14px; }
.filter span { margin: 2px auto 0 14px; }
.filter kbd { width: 26px; height: 27px; border: 1px solid #dedee9; border-radius: 6px; font: 15px/25px "Open Sans", sans-serif; text-align: center; }
.today { font-size: 13.8px; color: #6b89ad; padding: 16px 0 0 6px; height: 46px; }
.build { height: 38px; display: flex; align-items: center; padding-left: 6px; color: #1ea64b; }
.num { color: #14141f; font-size: 15px; width: 17px; margin-left: 14px; padding-top: 2px; }
.time { color: #6b89ad; font-size: 15.2px; width: 94px; margin-left: 10px; padding-top: 2px; letter-spacing: -.35px; }
.prog { width: 125px; height: 15px; border-radius: 8px; background: #d5dde8; padding: 3px; margin-left: 12px; }
.prog i { display: block; width: 108px; height: 9px; border-radius: 5px; background: #0670ea; }
.stop { width: 19px; height: 19px; border-radius: 4px; background: #fbd9de; color: #e6001f; display: grid; place-items: center; margin-left: 10px; }
.bch { color: #5f81ac; margin: 0 13px 0 auto; }

.main { width: 1487px; padding: 32px 32px 0 31px; }
.titlebar { height: 43px; display: flex; align-items: center; color: #1ea64b; padding-left: 1px; }
.titlebar > svg { margin-top: -1px; }
h1 { margin: 2px auto 0 21px; font-weight: 600; font-size: 27.2px; line-height: 40px; letter-spacing: -.1px; color: #14141f; }
.adddesc { width: 182px; height: 43px; border-radius: 12px; background: #f8f8fa; color: #24242f; display: flex; align-items: center; padding-left: 18px; gap: 12px; }
h2 { margin: 49px 0 29px; font-weight: 600; font-size: 24.5px; line-height: 35px; letter-spacing: .4px; }
.stage { display: flex; }
.runs { width: 287px; display: flex; flex-direction: column; }
.avg { height: 149px; padding: 94px 18px 0 0; text-align: right; border-bottom: 2px solid #d4d4d4; color: #2a2a33; background: linear-gradient(transparent 92%, #ececec) ; }
.run { height: 99px; border-left: 1px solid #e4e4e4; border-bottom: 1px solid #eee; position: relative; display: flex; padding: 23px 0 0 27px; background: #fff; font-size: 13px; color: #24242f; }
.run.odd { margin-top: 26px; height: 100px; border-top: 1px solid #e0e0e0; background: linear-gradient(#ededed, #f1f1f1 60%); }
.badge { position: absolute; left: 9px; top: 8px; width: 32px; height: 20px; border-radius: 10px; background: #8aacd2; color: #fff; font: 600 12px/20px "Open Sans", sans-serif; text-align: center; z-index: 1; text-shadow: 0 1px 1px rgba(0, 0, 0, .4); }
.run.odd .badge { top: 9px; }
.run.odd .start, .run.odd .changes { padding-top: 2px; }
.start { width: 66px; height: 56px; padding-top: 1px; line-height: 27px; text-align: center; background: #fff; box-shadow: 0 1px 3px rgba(0, 0, 0, .3); }
.changes, .run.odd .changes { width: 66px; height: 56px; padding-top: 3px; line-height: 18.5px; text-align: center; color: #a0a0a0; background: rgba(0, 0, 0, .1); border-radius: 0 6px 6px 0; box-shadow: inset 1px 1px 2px rgba(0, 0, 0, .25); }
.table { width: 781px; height: 378px; border: 1px solid #e6e6e6; box-shadow: 0 2px 5px rgba(0, 0, 0, .3); background: #e8e8e8; }
.row { display: grid; grid-template-columns: repeat(5, 1fr); column-gap: 1px; text-align: center; }
.row > div { background: #fff; }
.row > div:nth-child(odd) { background: #f7f7f7; }
.head { height: 86px; font-weight: 700; font-size: 16px; letter-spacing: -.25px; border-bottom: 2px solid #dcdcdc; }
.head > div { display: grid; place-items: center; align-content: center; padding: 2px 2px 0 0; }
.totals { height: 62px; border-bottom: 2px solid #e6e6e6; font-size: 16.2px; letter-spacing: -.3px; }
.totals > div { padding: 8px 1px 0 0; background: linear-gradient(#f1f1f1 78%, #c8c8c8 100%) !important; }
.totals > div:nth-child(odd) { background: linear-gradient(#e9e9e9 78%, #c2c2c2 100%) !important; }
.mini { display: grid; grid-template-columns: 2px 30px 55px 20px 30px; width: 137px; height: 6px; margin: 4px 0 0 5px; }
.mini i { background: #dedede; box-shadow: inset 0 0 1px 1px #c6c6c6; }
.totals > div:nth-child(1) i:nth-child(1), .totals > div:nth-child(2) i:nth-child(2), .totals > div:nth-child(3) i:nth-child(3),
.totals > div:nth-child(4) i:nth-child(4), .totals > div:nth-child(5) i:nth-child(5) { background: linear-gradient(#85add6, #7a9fd6 55%, #4274d0 75%); box-shadow: 0 1px 2px rgba(0, 0, 0, .25); }
.cells > div { padding: 1px 1px 2px; display: grid; }
.cells > .g { background: #e2fddf; }
.cells > .g:nth-child(odd) { background: #dcf6da; }
.cells > div > span { border: 1px solid #d2d8d2; border-radius: 5px; padding: 28px 1px 0 0; color: #777f78; font-size: 16.2px; line-height: 27px; }
.cells > div > .m { color: #666e68; font-size: 16.6px; padding-top: 27px; }
.cells > div > .l { color: #3d4640; font-size: 20px; }
.r5 { height: 101px; }
.r4 { height: 103px; }
.cells.r4 > div { padding-top: 2px; }
.cells.r4 > div > span { padding-top: 28px; }
.r4 > .g { background: #d8f2d7; }
.r4 > .g:nth-child(odd) { background: #d1ebd0; }
.cells > .running > span { color: #2c4666; background: linear-gradient(45deg, #5e9bd1 25%, #428bca 25%, #428bca 50%, #5e9bd1 50%, #5e9bd1 75%, #428bca 75%) 0 0 / 48px 48px; border-color: #cfcfcf; background-clip: padding-box; }
.cells > .running { position: relative; }
.cells > .running::after { content: ""; position: absolute; left: 117px; right: 2px; top: 2px; bottom: 3px; background: #fff; border-radius: 0 4px 4px 0; }
.total { height: 24px; border-top: 1px solid #dadada; border-bottom: 1px solid #dadada; padding: 2px 7px 2px 6px; background: #eaeaea; }
.track { height: 18px; border-radius: 4px; background: #c4c4c4; box-shadow: inset 0 2px 5px rgba(0, 0, 0, .4); overflow: hidden; }
.track i { display: block; width: 90%; height: 18px; background: linear-gradient(45deg, #5e9bd1 25%, #428bca 25%, #428bca 50%, #5e9bd1 50%, #5e9bd1 75%, #428bca 75%) -12px 0 / 48px 48px; box-shadow: inset 0 -1px 1px rgba(0, 0, 0, .25); }
.perma { margin: 23px 0 29px; letter-spacing: -.2px; }
.links { list-style: disc; padding-left: 48px; }
.links a { color: #0b7ae6; }

/* Windows taskbar */
.taskbar { height: 70px; flex: none; background: linear-gradient(90deg, #1c2431 0, #202223 100px, #222423); display: flex; align-items: center; color: #fff; }
.weather { width: 40px; margin-left: 30px; position: relative; padding-top: 6px; }
.weather span { position: absolute; right: -1px; top: -8px; width: 24px; height: 24px; border-radius: 50%; background: #ff9ca6; color: #1c1c1c; font-size: 17px; line-height: 24px; text-align: center; }
.start-btn { margin-left: 244px; }
.tsearch { width: 329px; height: 48px; margin-left: 21px; margin-top: -2px; border-radius: 24px; background: #404243; border: 1px solid #545657; border-top-color: #676869; display: flex; align-items: center; padding: 0 15px 0 16px; font-size: 20px; letter-spacing: -.3px; color: #cfcfcf; }
.tsearch span { margin-left: 16px; }
.plant { margin-left: auto; }
.apps-row { display: flex; margin-left: 6px; }
.app { width: 60px; height: 60px; margin-right: 6px; border-radius: 8px; display: grid; place-items: center; position: relative; top: -1px; }
.app > svg { width: 36px; height: 36px; margin-top: 1px; }
.run-on::after, .current::after { content: ""; position: absolute; bottom: 1px; left: 26px; width: 9px; height: 5px; border-radius: 3px; background: #9a9a9a; }
.current { background: #303332; border: 1px solid #3a3d3c; }
.current::after { left: 17px; width: 24px; background: #4cc2ff; bottom: 0; }
.bubble { position: absolute; left: 28px; top: 5px; width: 31px; height: 24px; border-radius: 12px; background: #4cc2ff; color: #0c1c28; font-size: 17px; line-height: 24px; text-align: center; letter-spacing: -.5px; }
.bubble.a { left: 31px; top: 4px; width: 24px; background: #f4511e; color: #fff; font-size: 14px; }
.wd { font: 700 15px "Open Sans", sans-serif; fill: #fff; letter-spacing: 0; }
.tray { display: flex; align-items: center; margin-left: auto; padding-right: 32px; font-size: 18px; line-height: 23px; letter-spacing: -.25px; }
.lang { width: 40px; text-align: center; margin: 0 25px 0 29px; }
.vol { margin-left: 12px; }
.bat { margin-left: 11px; }
.clock { width: 96px; text-align: right; margin: -3px 14px 0 20px; }
```
